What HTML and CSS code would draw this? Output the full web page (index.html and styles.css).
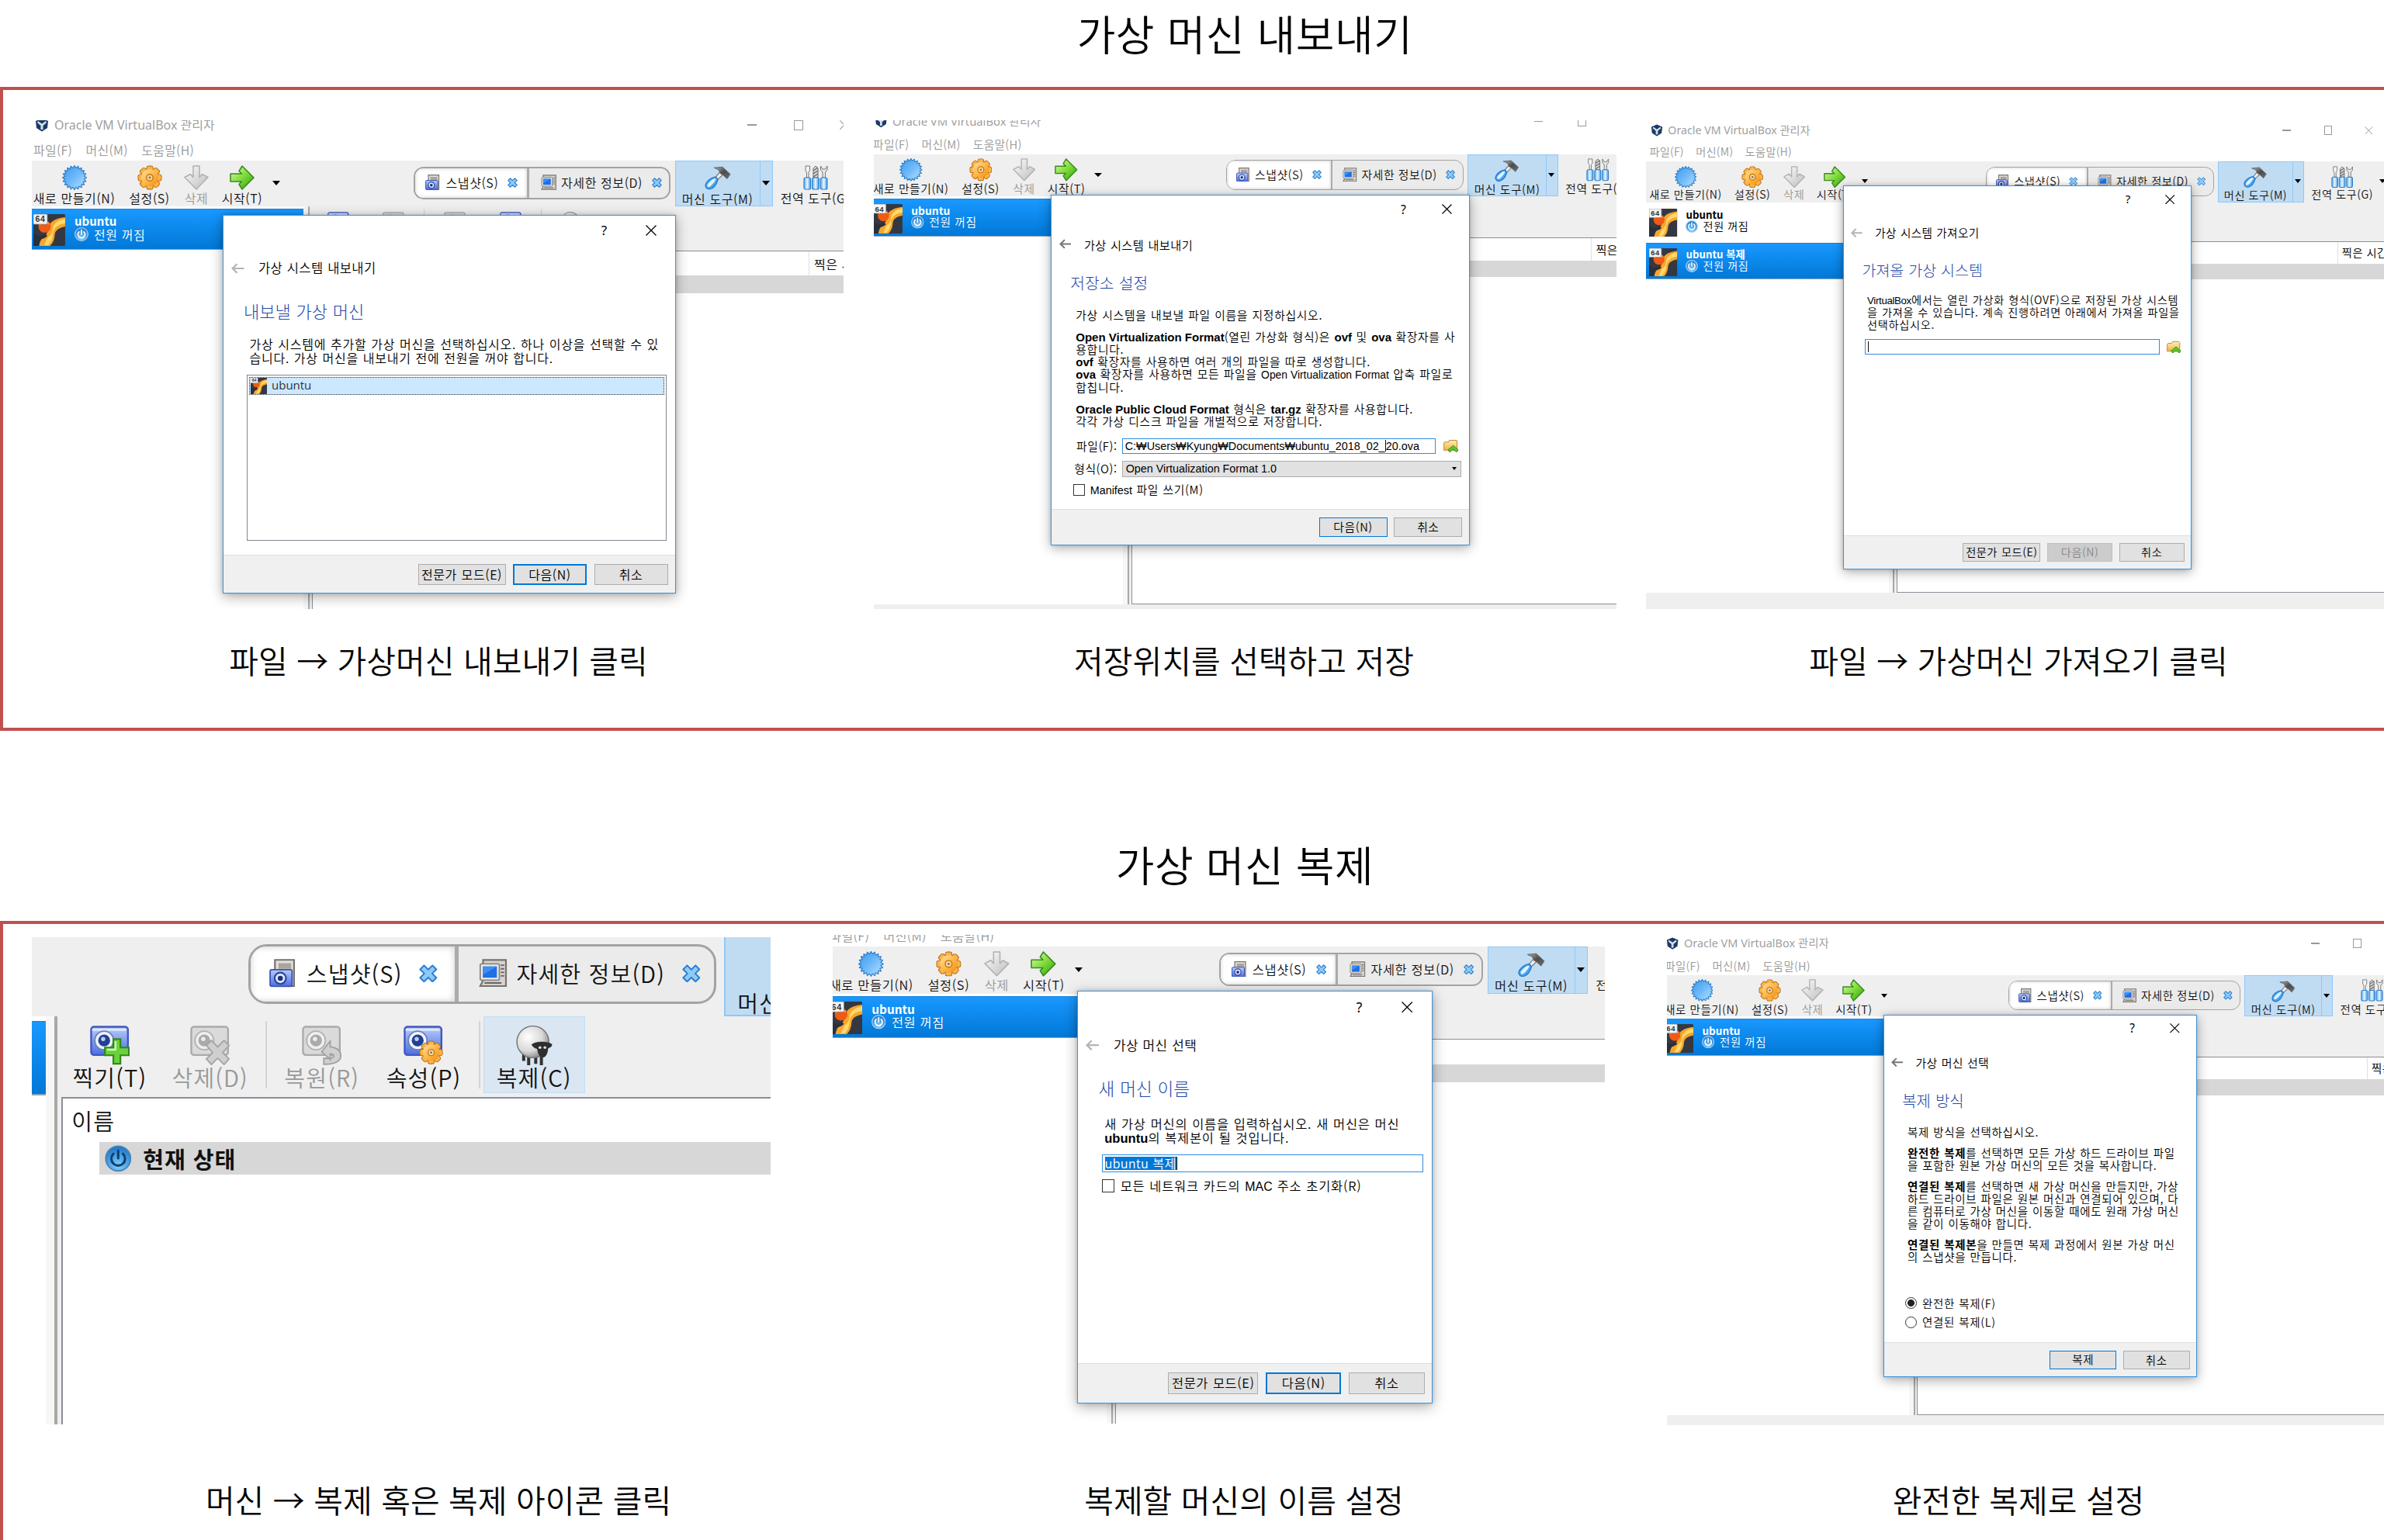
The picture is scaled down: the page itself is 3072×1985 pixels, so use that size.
FILE: index.html
```html
<!DOCTYPE html>
<html lang="ko">
<head>
<meta charset="utf-8">
<title>가상 머신 내보내기 / 복제</title>
<link rel="stylesheet" href="styles.css">
</head>
<body>
<svg class="defs" width="0" height="0" aria-hidden="true">
  <defs>
    <linearGradient id="gBlue" x1="0" y1="0" x2="1" y2="1"><stop offset="0" stop-color="#3d98ee"/><stop offset=".5" stop-color="#6db9fa"/><stop offset="1" stop-color="#c4e6ff"/></linearGradient>
    <linearGradient id="gOrange" x1="0" y1="0" x2="1" y2="1"><stop offset="0" stop-color="#ffe0a0"/><stop offset=".5" stop-color="#fdb94a"/><stop offset="1" stop-color="#f08c10"/></linearGradient>
    <linearGradient id="gGreen" x1="0" y1="0" x2="1" y2="1"><stop offset="0" stop-color="#e2fbb8"/><stop offset=".5" stop-color="#7fdc3c"/><stop offset="1" stop-color="#2d9a10"/></linearGradient>
    <linearGradient id="gGrey" x1="0" y1="0" x2="1" y2="1"><stop offset="0" stop-color="#fdfdfd"/><stop offset="1" stop-color="#bcbcbc"/></linearGradient>
    <linearGradient id="gSteel" x1="0" y1="0" x2="1" y2="1"><stop offset="0" stop-color="#b4b4b4"/><stop offset=".5" stop-color="#4c4c4c"/><stop offset="1" stop-color="#6e6e6e"/></linearGradient>
    <linearGradient id="gCam" x1="0" y1="0" x2="0" y2="1"><stop offset="0" stop-color="#b9ccfb"/><stop offset="1" stop-color="#4a6fe0"/></linearGradient>
    <linearGradient id="gHandle" x1="0" y1="0" x2="1" y2="0"><stop offset="0" stop-color="#58b0f4"/><stop offset=".5" stop-color="#e8f7ff"/><stop offset="1" stop-color="#3c98ea"/></linearGradient>
    <linearGradient id="gFolder" x1="0" y1="0" x2="0" y2="1"><stop offset="0" stop-color="#fff0b8"/><stop offset="1" stop-color="#f0b23c"/></linearGradient>
    <radialGradient id="gWool" cx=".35" cy=".35" r=".75"><stop offset="0" stop-color="#fff"/><stop offset=".6" stop-color="#d8d8d8"/><stop offset="1" stop-color="#777"/></radialGradient>
    <radialGradient id="gPower" cx=".5" cy=".8" r=".8"><stop offset="0" stop-color="#7fd0ff"/><stop offset="1" stop-color="#1873c8"/></radialGradient>
  </defs>
  <symbol id="i-new" viewBox="0 0 32 32">
    <polygon points="16,.4 17.900,3.700 20.800,1.200 21.600,4.900 25.200,3.400 24.800,7.200 28.600,6.800 27.100,10.400 30.800,11.200 28.300,14.100 31.600,16 28.300,17.900 30.800,20.800 27.100,21.600 28.600,25.200 24.800,24.800 25.200,28.600 21.600,27.100 20.800,30.800 17.900,28.300 16,31.600 14.100,28.300 11.200,30.800 10.400,27.100 6.800,28.600 7.200,24.800 3.400,25.200 4.900,21.600 1.200,20.800 3.700,17.900 .4,16 3.700,14.100 1.200,11.200 4.900,10.400 3.400,6.800 7.200,7.200 6.800,3.400 10.400,4.900 11.200,1.200 14.100,3.700" fill="url(#gBlue)" stroke="#2f7fcb" stroke-width="1.200" stroke-linejoin="round"/>
  </symbol>
  <symbol id="i-gear" viewBox="0 0 32 32">
    <g stroke="#b8660c" stroke-width="1.8" fill="#b8660c"><rect x="12.3" y="1.4" width="7.4" height="29.2" rx="2.2"/><rect x="12.3" y="1.4" width="7.4" height="29.2" rx="2.2" transform="rotate(45 16 16)"/><rect x="12.3" y="1.4" width="7.4" height="29.2" rx="2.2" transform="rotate(90 16 16)"/><rect x="12.3" y="1.4" width="7.4" height="29.2" rx="2.2" transform="rotate(135 16 16)"/><circle cx="16" cy="16" r="10.8"/></g>
    <g fill="#fbb445"><rect x="12.3" y="1.4" width="7.4" height="29.2" rx="2.2"/><rect x="12.3" y="1.4" width="7.4" height="29.2" rx="2.2" transform="rotate(45 16 16)"/><rect x="12.3" y="1.4" width="7.4" height="29.2" rx="2.2" transform="rotate(90 16 16)"/><rect x="12.3" y="1.4" width="7.4" height="29.2" rx="2.2" transform="rotate(135 16 16)"/></g>
    <circle cx="16" cy="16" r="11" fill="url(#gOrange)"/>
    <circle cx="16" cy="16" r="4.2" fill="#f8d8a0" stroke="#c27412" stroke-width="1.4"/><circle cx="16" cy="16" r="1.4" fill="#8c6a3c"/>
  </symbol>
  <symbol id="i-discard" viewBox="0 0 32 32"><path d="M12 1h8v14.5l3.5-4L31 15.500 16 31 1 15.500l7.500-4 3.500 4z" fill="url(#gGrey)" stroke="#b0b0b0" stroke-width="1.500" stroke-linejoin="round"/></symbol>
  <symbol id="i-start" viewBox="0 0 32 32"><path d="M1 11h14.500l-3.500-3.500L16 1l15 15-15 15-4-6.500 3.500-3.500H1z" fill="url(#gGreen)" stroke="#3c8c1c" stroke-width="1.600" stroke-linejoin="round"/></symbol>
  <symbol id="i-hammer" viewBox="0 0 34 32">
    <path d="M20 8.500 24 11.500 16.500 19 13.500 16z" fill="#efefef" stroke="#777" stroke-width="1.200"/>
    <path d="M12 3.200 23 2.200 33 11.500 29 17.500 23.500 12.500 20 10.500 18 5.800z" fill="url(#gSteel)" stroke="#6a6a6a" stroke-width="1" stroke-linejoin="round"/>
    <path d="M13.200 15.200c2 .3 3.400 1.800 3.600 4-1.500 5-5 10-9.300 11.300-3.500.9-6.800-1.300-6.500-4.800.6-4.500 6.500-9.500 12.200-10.500z" fill="#48a6f2" stroke="#2277cc" stroke-width="1.300"/>
    <path d="M13 17c-4 1.500-8.500 5.500-9.700 9 0 2 2.200 2.400 3.700 1.200C10 25 13 21 14.500 18z" fill="#dff3ff"/>
  </symbol>
  <symbol id="i-tools" viewBox="0 0 32 32">
    <path d="M3 1h5.500v6L7 9v7H4.500V9L3 7z" fill="#f4f4f4" stroke="#777"/>
    <path d="M13 16V4l3-3 3 3v12z" fill="#d8d8d8" stroke="#666"/><path d="m13 7 6-4M13 11l6-4M13 15l6-4" stroke="#666" stroke-width="1.200"/>
    <path d="M22.500 1v5l2.500 3v7h3.500V9L31 6V1l-2.500 4h-3.500z" fill="#e8e8e8" stroke="#777"/>
    <g fill="url(#gHandle)" stroke="#2f7cc8" stroke-width="1.200"><rect x="1" y="16" width="8.500" height="15" rx="2"/><rect x="11.700" y="16" width="8.500" height="15" rx="2"/><rect x="22.400" y="16" width="8.500" height="15" rx="2"/></g>
  </symbol>
  <symbol id="i-snap" viewBox="0 0 20 20">
    <path d="M4 .7h13.500v18.600H4z" fill="#e2ded8" stroke="#77736e" stroke-width="1.200"/><path d="M6.500 3h9v4h-9z" fill="#a8a49e"/>
    <rect x=".6" y="7.600" width="15.500" height="11.800" rx="1.200" fill="url(#gCam)" stroke="#3a52b4"/><circle cx="7.800" cy="13.700" r="4" fill="#dfe8ff" stroke="#2c459c" stroke-width="1.200"/><circle cx="7.800" cy="13.700" r="1.800" fill="#1d2f78"/>
  </symbol>
  <symbol id="i-details" viewBox="0 0 20 20">
    <path d="M3 .8h16.200v18.400H1l2-4z" fill="#d6d3ce" stroke="#77736e" stroke-width="1.200"/><rect x="1" y="3.500" width="13.500" height="11.500" rx="1" fill="#efede9" stroke="#8a867f"/><rect x="2.800" y="5.300" width="10" height="8" fill="#1f6fe6"/><path d="M2.800 5.300h10l-10 6z" fill="#3f8ff2"/><path d="M15.500 4.500h2.500M15.500 7h2.500M15.500 9.500h2.500M15.500 12h2.500M4 17h12" stroke="#666" stroke-width="1"/>
  </symbol>
  <symbol id="i-x" viewBox="0 0 14 14"><path d="m3.800.8 3.200 3.200L10.200.8l3 3L10 7l3.200 3.200-3 3L7 10l-3.200 3.200-3-3L4 7 .8 3.800z" fill="#8ccaf8" stroke="#2f7fd0" stroke-width="1.200" stroke-linejoin="round"/></symbol>
  <symbol id="i-os" viewBox="0 0 41 41">
    <rect width="41" height="41" rx="1.500" fill="#343842"/>
    <path d="M41 4v12c-9 2-13 5-13.500 11-.5 7-3 11-6 14H7.500c1-6 3-11 8-14 4-3 3-9 5-13C23 9 30 5 41 4z" fill="#f7a62a"/><path d="M41 6v6c-10 1-15 6-16 14-.5 7-3 11-6 14h-5c3-5 3-9 7-12 5-4 3-9 5-13 3-5 8-8 15-9z" fill="#ffd86e"/>
    <path d="M0 24c4 5 12 5 15 1l3 3c-3 4-8 3-10 7l-2 6H0z" fill="#2b2f3a"/><circle cx="14.500" cy="16" r="8" fill="#f05a14"/><path d="M8 14a7 7 0 0 1 12-1" stroke="#ff9c4c" stroke-width="2" fill="none"/>
    <rect x="0" y="0" width="18" height="13" rx="1" fill="#f4f4f4" stroke="#888" stroke-width=".8"/><text x="9" y="10.300" font-size="10.500" text-anchor="middle" font-family="Liberation Sans, sans-serif" font-weight="bold" fill="#333">64</text>
  </symbol>
  <symbol id="i-power" viewBox="0 0 18 18"><circle cx="9" cy="9" r="8.300" fill="url(#gPower)" stroke="#a8cdea" stroke-width="1.300"/><path d="M5.800 5.800a4.600 4.600 0 1 0 6.400 0M9 3.600v5.200" fill="none" stroke="#fff" stroke-width="1.700" stroke-linecap="round"/></symbol>
  <symbol id="i-powerdark" viewBox="0 0 18 18"><circle cx="9" cy="9" r="8.300" fill="url(#gPower)" stroke="#4a86b8" stroke-width="1"/><path d="M5.800 5.800a4.600 4.600 0 1 0 6.400 0M9 3.600v5.200" fill="none" stroke="#10406e" stroke-width="1.600" stroke-linecap="round"/></symbol>
  <symbol id="i-vbox" viewBox="0 0 18 18"><path d="M9 .5 17 4l-1 9-7 4.500L2 13 1 4z" fill="#1c3a66"/><path d="m4 4 5 3.500L14 4l1 2-4.500 4v5h-3v-5L3 6z" fill="#d4dfec"/></symbol>
  <symbol id="cam" viewBox="0 0 28 28"><rect x=".8" y=".8" width="26" height="20" rx="2" fill="url(#gCam)" stroke="#4058c0" stroke-width="1.300"/><path d="M1.500 3h24" stroke="#dfe7ff" stroke-width="1.500"/><circle cx="10" cy="10.500" r="6.600" fill="#eef3ff" stroke="#6f7fb8"/><circle cx="10" cy="10.500" r="4.200" fill="#223f92"/><circle cx="9.300" cy="9.500" r="1.500" fill="#b9cdf8"/></symbol>
  <symbol id="camg" viewBox="0 0 28 28"><rect x=".8" y=".8" width="26" height="20" rx="2" fill="#dadada" stroke="#aaa" stroke-width="1.300"/><circle cx="10" cy="10.500" r="6.600" fill="#eee" stroke="#b0b0b0"/><circle cx="10" cy="10.500" r="4.200" fill="#aaa"/><circle cx="9.300" cy="9.500" r="1.500" fill="#eee"/></symbol>
  <symbol id="i-take" viewBox="0 0 28 28"><use href="#cam"/><path d="M16.500 9.500h5v6h6v5.500h-6v6h-5v-6h-6v-5.500h6z" fill="#6cd03c" stroke="#2f8a18" stroke-width="1.200"/><path d="M18 11v6h-6" stroke="#d0f7b0" stroke-width="1.300" fill="none"/></symbol>
  <symbol id="i-drop" viewBox="0 0 28 28"><use href="#camg"/><path d="m15 10.500 4.500 4.500 4.500-4.500 3.500 3.500-4.500 5 4.500 4.500-3.500 4-4.500-4.500-4.500 4.500-3.500-4 4.500-4.500-4.500-5z" fill="#cfcfcf" stroke="#a4a4a4"/></symbol>
  <symbol id="i-restore" viewBox="0 0 28 28"><use href="#camg"/><path d="M14 18.500 20 11v4c5 .5 7.500 3 7.500 6.500s-4 6-12 5.800V23c4.500.5 7-.2 7-1.600 0-1-1-1.400-2.500-1.400v4z" fill="#cfcfcf" stroke="#a0a0a0"/></symbol>
  <symbol id="i-props" viewBox="0 0 28 28"><use href="#cam"/><use href="#i-gear" x="11" y="10.500" width="17" height="17"/></symbol>
  <symbol id="i-sheep" viewBox="0 0 26 28"><path d="M5.500 20v5M9 22v6M14 22v5M18 22v6" stroke="#333" stroke-width="2.200"/><ellipse cx="12" cy="11.500" rx="11.300" ry="11.200" fill="url(#gWool)" stroke="#777" stroke-width=".8"/><path d="M11 13.500c2-2.500 11-3 14.500-.5.300 2-1.500 2.500-2.700 3-.3 3-1.300 6.500-3.800 6.500s-3.500-3-4-6c-1.200-.3-3-1-4-3z" fill="#2e2e2e"/><circle cx="17" cy="15.500" r="1" fill="#ddd"/><circle cx="20.500" cy="15.500" r="1" fill="#ddd"/></symbol>
  <symbol id="i-folder" viewBox="0 0 21 19"><path d="M.7 5.500 2 4h5l1.500-2.500h9L19 3v12.500H.7z" fill="url(#gFolder)" stroke="#c08a3c" stroke-width="1.100"/><path d="m13.500 9 7 6-2 3-5-3.500L8.500 18 6.500 15z" fill="#5ac832" stroke="#2e8a16"/></symbol>
  <symbol id="i-back" viewBox="0 0 17 14"><path d="M16.500 7H2M7.500 1.200 1.600 7l5.900 5.800" fill="none" stroke="currentColor" stroke-width="2.200"/></symbol>
  <symbol id="i-close" viewBox="0 0 14 14"><path d="m.5.5 13 13M13.500.5l-13 13" stroke="currentColor" stroke-width="1.300"/></symbol>
</svg>

<template id="manager">
  <div class="titlebar"><svg><use href="#i-vbox"/></svg><span class="caption">Oracle VM VirtualBox 관리자</span><i class="min"></i><i class="max"></i><svg class="cls"><use href="#i-close"/></svg></div>
  <div class="menubar"><span>파일(F)</span><span>머신(M)</span><span>도움말(H)</span></div>
  <div class="toolbar">
    <div class="tool t-new"><svg><use href="#i-new"/></svg><span>새로 만들기(N)</span></div>
    <div class="tool t-set"><svg><use href="#i-gear"/></svg><span>설정(S)</span></div>
    <div class="tool t-del off"><svg><use href="#i-discard"/></svg><span>삭제</span></div>
    <div class="tool t-run"><svg><use href="#i-start"/></svg><span>시작(T)</span></div>
    <i class="caret"></i>
    <div class="tabs">
      <div class="tab on"><svg class="ti"><use href="#i-snap"/></svg><span>스냅샷(S)</span><svg class="tx"><use href="#i-x"/></svg></div>
      <div class="tab"><svg class="ti"><use href="#i-details"/></svg><span>자세한 정보(D)</span><svg class="tx"><use href="#i-x"/></svg></div>
    </div>
    <div class="split"><div class="tool"><svg class="wide"><use href="#i-hammer"/></svg><span>머신 도구(M)</span></div><div class="drop"><i class="caret"></i></div></div>
    <div class="tool t-glob"><svg><use href="#i-tools"/></svg><span>전역 도구(G)</span></div>
    <i class="caret far"></i>
  </div>
  <div class="work">
    <div class="sidebar"></div>
    <div class="splitter"></div>
    <div class="main">
      <div class="subbar">
        <div class="sub s1"><svg><use href="#i-take"/></svg><span>찍기(T)</span></div>
        <div class="sub s2 off"><svg><use href="#i-drop"/></svg><span>삭제(D)</span></div>
        <i class="sep"></i>
        <div class="sub s2 off"><svg><use href="#i-restore"/></svg><span>복원(R)</span></div>
        <div class="sub s3"><svg><use href="#i-props"/></svg><span>속성(P)</span></div>
        <i class="sep thin"></i>
        <div class="sub s4 clone"><svg><use href="#i-sheep"/></svg><span>복제(C)</span></div>
      </div>
      <div class="table">
        <div class="thead"><span class="name">이름</span><span class="when">찍은 시간</span></div>
        <div class="trow"><svg><use href="#i-powerdark"/></svg><b>현재 상태</b></div>
      </div>
    </div>
  </div>
</template>
<template id="vm"><div class="vm"><svg class="os"><use href="#i-os"/></svg><div><b></b><p><svg><use href="#i-power"/></svg><span>전원 꺼짐</span></p></div></div></template>

<section class="part">
  <h1>가상 머신 내보내기</h1>
  <div class="frame">
    <div class="shots">
      <div class="shot a1"><div class="manager" data-vms="ubuntu">
        <div class="dialog">
          <div class="dbar"><span>?</span><svg><use href="#i-close"/></svg></div>
          <div class="crumb dim"><svg><use href="#i-back"/></svg><span>가상 시스템 내보내기</span></div>
          <h2>내보낼 가상 머신</h2>
          <p>가상 시스템에 추가할 가상 머신을 선택하십시오. 하나 이상을 선택할 수 있<br>습니다. 가상 머신을 내보내기 전에 전원을 꺼야 합니다.</p>
          <div class="list"><div class="item"><svg><use href="#i-os"/></svg><span>ubuntu</span></div></div>
          <div class="foot"><span class="btn wide">전문가 모드(E)</span><span class="btn def">다음(N)</span><span class="btn">취소</span></div>
        </div>
      </div></div>
      <div class="shot a2"><div class="manager" data-vms="ubuntu">
        <div class="dialog">
          <div class="dbar"><span>?</span><svg><use href="#i-close"/></svg></div>
          <div class="crumb"><svg><use href="#i-back"/></svg><span>가상 시스템 내보내기</span></div>
          <h2>저장소 설정</h2>
          <p>가상 시스템을 내보낼 파일 이름을 지정하십시오.</p>
          <p><b class="lat">Open Virtualization Format</b>(열린 가상화 형식)은 <b class="lat">ovf</b> 및 <b class="lat">ova</b> 확장자를 사<br>용합니다.<br><b class="lat">ovf</b> 확장자를 사용하면 여러 개의 파일을 따로 생성합니다.<br><b class="lat">ova</b> 확장자를 사용하면 모든 파일을 <span class="lat thin">Open Virtualization Format</span> 압축 파일로<br>합칩니다.</p>
          <p><b class="lat">Oracle Public Cloud Format</b> 형식은 <b class="lat">tar.gz</b> 확장자를 사용합니다.<br>각각 가상 디스크 파일을 개별적으로 저장합니다.</p>
          <div class="field first"><label>파일(F):</label><div class="input lat">C:₩Users₩Kyung₩Documents₩ubuntu_2018_02_<i class="cur"></i>20.ova</div><svg class="folder"><use href="#i-folder"/></svg></div>
          <div class="field second"><label>형식(O):</label><div class="combo lat">Open Virtualization Format 1.0<i class="caret"></i></div></div>
          <div class="check"><i></i><span><span class="lat">Manifest</span> 파일 쓰기(M)</span></div>
          <div class="foot"><span class="btn def">다음(N)</span><span class="btn">취소</span></div>
        </div>
      </div></div>
      <div class="shot a3"><div class="manager" data-vms="ubuntu,ubuntu 복제">
        <div class="dialog">
          <div class="dbar"><span>?</span><svg><use href="#i-close"/></svg></div>
          <div class="crumb dim"><svg><use href="#i-back"/></svg><span>가상 시스템 가져오기</span></div>
          <h2>가져올 가상 시스템</h2>
          <p><span class="lat tight">VirtualBox</span>에서는 열린 가상화 형식(OVF)으로 저장된 가상 시스템<br>을 가져올 수 있습니다. 계속 진행하려면 아래에서 가져올 파일을<br>선택하십시오.</p>
          <div class="field"><div class="input"><i class="cur"></i></div><svg class="folder"><use href="#i-folder"/></svg></div>
          <div class="foot"><span class="btn wide">전문가 모드(E)</span><span class="btn no">다음(N)</span><span class="btn">취소</span></div>
        </div>
      </div></div>
    </div>
    <div class="captions"><span>파일 → 가상머신 내보내기 클릭</span><span>저장위치를 선택하고 저장</span><span>파일 → 가상머신 가져오기 클릭</span></div>
  </div>
</section>

<section class="part second-part">
  <h1>가상 머신 복제</h1>
  <div class="frame">
    <div class="shots">
      <div class="shot b1"><div class="manager" data-vms="ubuntu"></div></div>
      <div class="shot b2"><div class="manager" data-vms="ubuntu">
        <div class="dialog">
          <div class="dbar"><span>?</span><svg><use href="#i-close"/></svg></div>
          <div class="crumb dim"><svg><use href="#i-back"/></svg><span>가상 머신 선택</span></div>
          <h2>새 머신 이름</h2>
          <p>새 가상 머신의 이름을 입력하십시오. 새 머신은 머신<br><b class="lat">ubuntu</b>의 복제본이 될 것입니다.</p>
          <div class="field name"><div class="input"><mark>ubuntu 복제</mark><i class="cur"></i></div></div>
          <div class="check"><i></i><span>모든 네트워크 카드의 <span class="lat">MAC</span> 주소 초기화(R)</span></div>
          <div class="foot"><span class="btn wide">전문가 모드(E)</span><span class="btn def">다음(N)</span><span class="btn">취소</span></div>
        </div>
      </div></div>
      <div class="shot b3"><div class="manager" data-vms="ubuntu">
        <div class="dialog">
          <div class="dbar"><span>?</span><svg><use href="#i-close"/></svg></div>
          <div class="crumb"><svg><use href="#i-back"/></svg><span>가상 머신 선택</span></div>
          <h2>복제 방식</h2>
          <p>복제 방식을 선택하십시오.</p>
          <p><b>완전한 복제</b>를 선택하면 모든 가상 하드 드라이브 파일<br>을 포함한 원본 가상 머신의 모든 것을 복사합니다.</p>
          <p><b>연결된 복제</b>를 선택하면 새 가상 머신을 만들지만, 가상<br>하드 드라이브 파일은 원본 머신과 연결되어 있으며, 다<br>른 컴퓨터로 가상 머신을 이동할 때에도 원래 가상 머신<br>을 같이 이동해야 합니다.</p>
          <p><b>연결된 복제본</b>을 만들면 복제 과정에서 원본 가상 머신<br>의 스냅샷을 만듭니다.</p>
          <div class="radios"><div class="radio sel"><i></i><span>완전한 복제(F)</span></div><div class="radio"><i></i><span>연결된 복제(L)</span></div></div>
          <div class="foot"><span class="btn def">복제</span><span class="btn">취소</span></div>
        </div>
      </div></div>
    </div>
    <div class="captions"><span>머신 → 복제 혹은 복제 아이콘 클릭</span><span>복제할 머신의 이름 설정</span><span>완전한 복제로 설정</span></div>
  </div>
</section>
<script src="manager.js"></script>
</body>
</html>
```

FILE: styles.css
```css
* { box-sizing: border-box; }
html { overflow: hidden; }
body {
  margin: 0; width: 3072px; height: 1985px; overflow: hidden; background: #fff; color: #000;
  font-family: "Noto Sans CJK KR", "Noto Sans", sans-serif;
}
.defs { position: absolute; }
h1, h2, p { margin: 0; font-weight: inherit; }
i { font-style: normal; }

/* slide sections */
.part { overflow: hidden; }
.part h1 { height: 112px; padding-left: 136px; text-align: center; font-size: 54px; line-height: 86px; font-weight: 350; letter-spacing: .5px; }
.part .frame { width: 3084px; height: 830px; border: 4px solid #c0504d; }
.second-part h1 { margin-top: 133px; line-height: 78px; }
.shots { display: flex; padding: 39px 0 0 37px; height: 669px; }
.shot { flex: none; overflow: hidden; }
.captions { display: grid; grid-template-columns: 1122px 954px 1042px; text-align: center; font-size: 41px; line-height: 60px; font-weight: 350; padding-top: 35px; }
.second-part .shots { padding-top: 14px; height: 645px; }
.second-part .captions { padding-top: 66px; }
.second-part .frame { height: 798px; border-bottom: 0; }

/* each capture shows the same manager window at its own scale and crop */
.a1 { --s: 1; --x: 3px; --y: 8.3px; width: 1046px; height: 630px; }
.a2 { --s: .926; --x: 6px; --y: 12.8px; width: 957px; height: 630px; margin-left: 39px; }
.a3 { --s: .887; --x: 0px; --y: 0px; width: 951px; height: 630px; margin-left: 38px; }
.b1 { --s: 1.823; --x: 343px; --y: 63px; width: 952px; height: 628px; margin-top: 3px; }
.b2 { --s: 1.026; --x: 9px; --y: 45.400px; width: 995px; height: 630px; margin-left: 80px; }
.b3 { --s: .905; --x: 7.800px; --y: 5.800px; width: 924px; height: 629px; margin: 3px 0 0 80px; }
.manager {
  zoom: var(--s); position: relative; width: 1086px; height: 711px;
  margin: calc(var(--y) * -1) 0 0 calc(var(--x) * -1);
  display: flex; flex-direction: column; background: #efefef;
  font-size: 16px; line-height: 18px; letter-spacing: .6px; font-weight: 350; color: #111; white-space: nowrap;
}
.titlebar { display: flex; align-items: center; height: 29px; padding-left: 7px; background: #fff; color: #999; }
.titlebar svg { width: 18px; height: 18px; }
.titlebar .caption { margin-left: 7px; width: 893px; font-family: "Noto Sans", "Noto Sans CJK KR", sans-serif; font-size: 16px; font-weight: 400; letter-spacing: 0; color: #a0a0a0; }
.min { width: 12px; height: 1.500px; background: #999; }
.max { width: 12px; height: 13px; border: 1.200px solid #999; margin-left: 48px; }
.titlebar .cls { width: 12px; height: 12px; margin-left: 47px; }
.menubar { display: flex; gap: 17.500px; align-items: center; height: 31px; padding: 4px 0 0 5px; background: #fff; color: #999; letter-spacing: .25px; }
.toolbar { display: flex; height: 59px; background: #efefef; }
.tool { display: flex; flex-direction: column; align-items: center; padding-top: 6px; }
.tool svg { width: 32px; height: 32px; flex: none; }
.tool svg.wide { width: 34px; }
.tool span { margin-top: 1.500px; }
.off { color: #999; }
.t-new { width: 115px; } .t-set { width: 79px; } .t-del { width: 42px; } .t-run { width: 76px; } .t-glob { width: 92px; margin-left: 9px; }
.caret { width: 0; height: 0; border: 5.500px solid transparent; border-top: 6px solid #000; border-bottom: 0; margin: 26px 0 0 1px; flex: none; }
.caret.far { margin-left: 8px; }
.tabs { display: flex; width: 331px; height: 42px; margin: 8px 0 0 172px; border: 2px solid #a3a3a3; border-radius: 13px; overflow: hidden; background: #ebebeb; }
.tab { display: flex; align-items: center; padding: 0 0 1px 14.500px; }
.tab.on { width: 147px; padding-left: 13px; border-right: 3px solid #ababab; background: #fff; box-shadow: inset 0 0 5px #ccc; }
.ti { width: 20px; height: 20px; margin-right: 6.500px; }
.tx { width: 13px; height: 13px; margin-left: 12px; }
.split { display: flex; width: 126px; margin-left: 5.500px; background: #c0dcf3; border: 1.200px solid #90c8f6; }
.split .tool { width: 109px; padding-top: 5.500px; }
.split .drop { width: 16px; margin-left: auto; border-left: 1.200px solid #90c8f6; }
.split .caret { display: block; border-width: 6px 5px 0; margin: 25px 0 0 2px; }

.work { display: flex; height: 568px; }
.sidebar { width: 353px; margin-right: 6px; padding-top: 3px; background: #fff; box-shadow: 6px 0 0 #f7f7f7; }
.vm { display: flex; height: 53px; margin-bottom: 3.500px; padding: 6px 0 0 5px; gap: 12px; color: #000; }
.vm.cur-vm { background: linear-gradient(#1998ff, #0078d7); color: #fff; border-top: 1px solid #1583dc; border-bottom: 1.500px solid #8ba4b8; }
.os { width: 41px; height: 41px; }
.vm b { display: block; height: 17px; font-size: 15px; font-weight: 600; letter-spacing: 0; }
.vm p { display: flex; align-items: center; gap: 7px; height: 18px; }
.vm p svg { width: 18px; height: 18px; }
.splitter { width: 5px; background: #efefef; border-left: 2.500px solid #a8a8a8; }
.main { flex: 1; display: flex; flex-direction: column; }
.subbar { display: flex; height: 57px; margin-left: -2px; }
.sub { display: flex; flex-direction: column; align-items: center; height: 54px; padding-top: 6px; border: 1px solid transparent; }
.sub svg { width: 28px; height: 28px; flex: none; }
.sub span { margin-top: -.500px; }
.s1 { width: 72px; } .s2 { width: 70px; } .s3 { width: 74px; } .s4 { width: 72px; }
.sep { width: 9px; height: 48px; margin-top: 3px; background: linear-gradient(90deg, transparent 4px, #d4d4d4 4px 5.200px, transparent 5.200px); }
.sep.thin { width: 5px; background: linear-gradient(90deg, transparent 2px, #d4d4d4 2px 3.200px, transparent 3.200px); }
.b1 .clone { background: #dae6f1; border-color: #c0dff5; }
.table { flex: 1; background: #fff; border: 1.500px solid #8a8f99; border-right: 0; }
.thead { display: flex; height: 31px; }
.thead .name { width: 640px; padding: 6.500px 0 0 6px; border-right: 1px solid #e0e0e0; }
.thead .when { padding: 7px 0 0 6px; font-weight: 400; }
.trow { display: flex; align-items: center; gap: 8px; height: 23px; margin-left: 25.500px; padding-left: 4px; background: #d7d7d7; }
.trow svg { width: 19px; height: 19px; }
.trow b { font-weight: 600; letter-spacing: .5px; }

/* wizard dialogs float over the manager */
.dialog {
  position: absolute; display: flex; flex-direction: column; background: #fff;
  border: 1.400px solid #3b93dc; box-shadow: 0 4px 16px rgba(0, 0, 0, .33), 0 0 5px rgba(0, 0, 0, .15);
  letter-spacing: .75px; word-spacing: .6px; line-height: 17.600px; color: #000; font-weight: 300;
}
.a1 .dialog { left: 249px; top: 130.300px; width: 584px; height: 488px; }
.a2 .dialog { left: 252.500px; top: 116.800px; width: 583px; height: 487.500px; }
.a3 .dialog { left: 286.800px; top: 94.800px; width: 506px; height: 558.500px; }
.b2 .dialog { left: 315.800px; top: 115.800px; width: 447px; height: 518px; }
.b3 .dialog { left: 315.800px; top: 115.800px; width: 447px; height: 517px; }
.dbar { display: flex; justify-content: flex-end; align-items: center; gap: 49px; height: 38px; padding-right: 24px; font-family: "Noto Sans", sans-serif; font-size: 17px; font-weight: 400; }
.dbar svg { width: 14px; height: 14px; }
.crumb { display: flex; align-items: center; gap: 18px; height: 59px; padding-left: 10px; font-size: 16.500px; letter-spacing: .4px; font-weight: 350; }
.crumb svg { width: 17px; height: 14px; color: #777; }
.crumb.dim svg { color: #b4b4b4; }
.dialog h2 { height: 60px; padding: 10px 0 0 26px; font-size: 22px; line-height: 30px; letter-spacing: 0; font-weight: 300; color: #1f4aa8; }
.dialog p { padding-left: 33.500px; margin-bottom: 12.500px; font-weight: 350; }
.lat { font-family: "Liberation Sans", "Noto Sans CJK KR", sans-serif; letter-spacing: 0; word-spacing: 0; font-size: 15.500px; }
p .lat, .check .lat { line-height: 0; }
b.lat { font-size: 16.200px; font-weight: 700; }
.dialog p b { font-weight: 700; }
.lat.thin { font-size: 15px; }
.lat.tight { font-size: 15px; letter-spacing: -.4px; }
.list { width: 541px; height: 214px; margin: 0 0 0 30px; padding: 2px; border: 1.200px solid #828790; }
.item { display: flex; align-items: center; gap: 6px; height: 23px; padding-left: 1px; background: #cce8ff; border: 1px dotted #333; font-family: "Open Sans", sans-serif; font-size: 15px; font-weight: 400; letter-spacing: 0; color: #333; }
.item svg { width: 21px; height: 21px; }
.field { display: flex; align-items: center; height: 22px; margin-left: 30px; }
.field.first { margin-top: 2px; }
.field.second { margin-top: 10px; margin-bottom: 9px; }
.field label { width: 68px; padding-right: 7px; text-align: right; letter-spacing: .6px; }
.input { display: flex; align-items: center; height: 22px; padding: 0 3px; border: 1.500px solid #2f8ddd; background: #fff; }
.a2 .input { width: 436px; }
.a3 .input { width: 428px; }
.b2 .input { width: 404px; }
.folder { width: 21px; height: 19px; margin-left: 11px; }
.cur { width: 1.300px; height: 16px; background: #111; flex: none; }
.combo { display: flex; justify-content: space-between; align-items: center; width: 472px; height: 22px; padding: 0 5px 0 4px; background: #e1e1e1; border: 1.200px solid #adadad; }
.combo .caret { margin: 0; border-width: 5px 4px 0; }
.field.name { margin-bottom: 8px; }
mark { background: #0078d7; color: #fff; height: 17px; line-height: 16px; letter-spacing: .1px; }
.check, .radio { display: flex; align-items: center; height: 18px; margin-left: 30px; gap: 7px; }
.check, .radio, .field, .btn { font-weight: 350; }
.check i { width: 16.500px; height: 16.500px; border: 1.400px solid #333; }
.radios { margin-top: 36px; }
.radio { gap: 8px; margin-bottom: 9px; }
.radio i { width: 16.500px; height: 16.500px; border: 1.400px solid #333; border-radius: 50%; }
.radio.sel i { background: radial-gradient(circle, #222 4.600px, transparent 5.200px); }
.foot { display: flex; justify-content: flex-end; gap: 9.500px; height: 49px; margin-top: auto; padding: 10.500px 9.500px 0 0; background: #f0f0f0; border-top: 1px solid #dfdfdf; }
.btn { width: 95px; height: 27px; text-align: center; line-height: 24px; letter-spacing: .6px; background: #e1e1e1; border: 1.300px solid #adadad; }
.btn.wide { width: 113px; }
.btn.def { border: 2px solid #0078d7; line-height: 23px; }
.btn.no { background: #ccc; border-color: #bfbfbf; color: #888; }
```

FILE: manager.js
```js
// Fill every capture with the manager chrome and its list of machines.
const chrome_ = document.getElementById('manager').content;
const vmTpl = document.getElementById('vm').content;
document.querySelectorAll('.manager').forEach(win => {
  const view = chrome_.cloneNode(true);
  const side = view.querySelector('.sidebar');
  const names = win.dataset.vms.split(',');
  names.forEach((name, i) => {
    const row = vmTpl.cloneNode(true);
    row.querySelector('b').textContent = name;
    if (i === names.length - 1) row.querySelector('.vm').classList.add('cur-vm');
    side.append(row);
  });
  win.prepend(view);
});
```
